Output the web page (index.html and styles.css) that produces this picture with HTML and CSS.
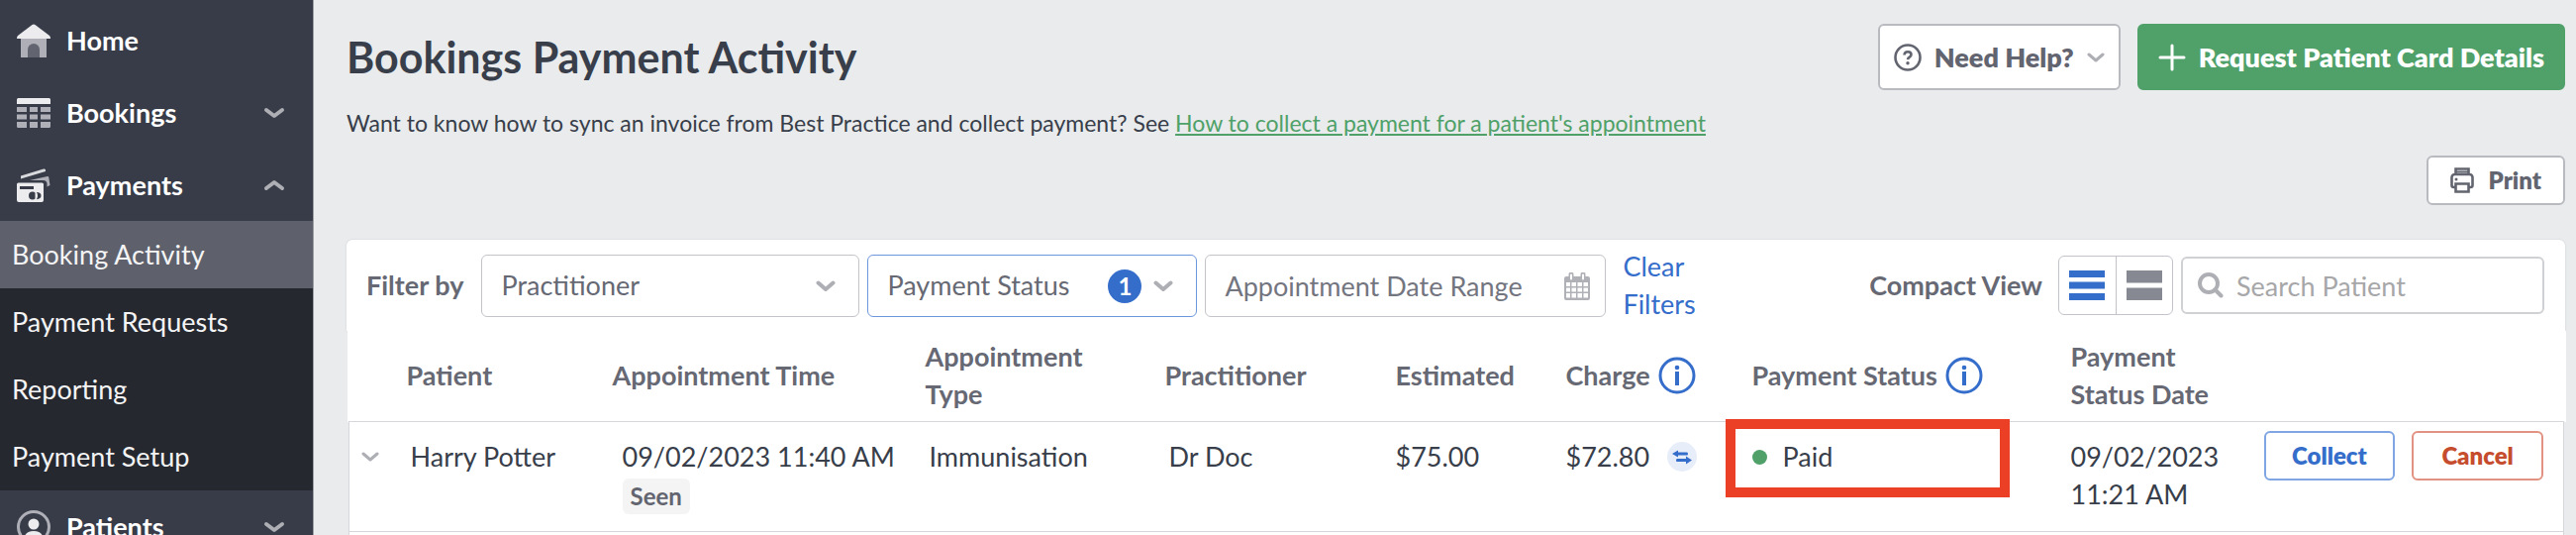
FILE: index.html
```html
<!DOCTYPE html>
<html lang="en">
<head>
<meta charset="utf-8">
<title>Bookings Payment Activity</title>
<link rel="stylesheet" href="styles.css">
</head>
<body>
<div class="app">
  <nav class="sidebar">
    <a class="nav-item" href="#">
      <svg class="nav-icon" viewBox="0 0 34 34"><path fill="#aeafb7" d="M4 14h26v20H4z"/><path fill="#62656f" d="M11 34V26a6 6 0 0 1 12 0v8z"/><path fill="#ececee" d="M15.500 1a2.500 2.500 0 0 1 3 0L33 12q1 1 1 3H0q0-2 1-3z"/></svg>
      <span>Home</span>
    </a>
    <a class="nav-item" href="#">
      <svg class="nav-icon" viewBox="0 0 34 34"><path fill="#ececee" d="M1.500 2h31a1.500 1.500 0 0 1 1.500 1.500V8H0V3.500A1.500 1.500 0 0 1 1.500 2z"/><path fill="#aeafb7" d="M0 11h10v5H0zM13 11h8v5h-8zM24 11h10v5H24zM0 18.500h10v5H0zM13 18.500h8v5h-8zM24 18.500h10v5H24zM0 26h10v6H1.500A1.500 1.500 0 0 1 0 30.500zM13 26h8v6h-8zM24 26h10v4.500a1.500 1.500 0 0 1-1.500 1.500H24z"/></svg>
      <span>Bookings</span>
      <svg class="nav-chevron" viewBox="0 0 22 12"><path d="M3 3l8 6 8-6"/></svg>
    </a>
    <a class="nav-item" href="#">
      <svg class="nav-icon" viewBox="0 0 34 34"><path fill="#d9dadd" d="M4 7.500L27 .500q1.500-.5 2 1V3L4 10.500z"/><path fill="#aeafb7" d="M13 12l18-4q1-.2 1.300 1L33.500 17l-3 1.500V15q-.5-3-4-3z"/><path fill="#ececee" fill-rule="evenodd" d="M1.500 14.500h24a1.500 1.500 0 0 1 1.500 1.500v16a2 2 0 0 1-2 2H2a2 2 0 0 1-2-2V16a1.500 1.500 0 0 1 1.500-1.500zM3 18v3h14v-3zM16 23.500a4 4 0 1 0 0 8 4 4 0 0 0 2.500-.9V24.400A4 4 0 0 0 16 23.500zM20 24q2 3.500 0 7.200 4.500-.2 4.500-3.600T20 24z"/></svg>
      <span>Payments</span>
      <svg class="nav-chevron" viewBox="0 0 22 12"><path d="M3 9l8-6 8 6"/></svg>
    </a>
    <div class="subnav">
      <a class="subnav-item is-active" href="#">Booking Activity</a>
      <a class="subnav-item" href="#">Payment Requests</a>
      <a class="subnav-item" href="#">Reporting</a>
      <a class="subnav-item" href="#">Payment Setup</a>
    </div>
    <a class="nav-item" href="#">
      <svg class="nav-icon" viewBox="0 0 34 34"><circle cx="17" cy="17" r="15.500" fill="none" stroke="#aeafb7" stroke-width="3"/><circle cx="17" cy="14" r="5.500" fill="#ececee"/><path fill="#ececee" d="M8 26q2-5 9-5t9 5q-4 4-9 4t-9-4z"/></svg>
      <span>Patients</span>
      <svg class="nav-chevron" viewBox="0 0 22 12"><path d="M3 3l8 6 8-6"/></svg>
    </a>
  </nav>

  <main class="main">
    <header class="page-head">
      <h1>Bookings Payment Activity</h1>
      <button class="btn btn-large" type="button">
        <svg class="icon-help" viewBox="0 0 28 28"><circle cx="14" cy="14" r="12.500" fill="none" stroke="currentColor" stroke-width="2.600"/><path d="M10.500 11.500q.3-3.300 3.600-3.300t3.400 2.900q0 1.500-1.700 2.600T14 16.200" fill="none" stroke="currentColor" stroke-width="2.600"/><circle cx="14" cy="19.700" r="1.700" fill="currentColor"/></svg>
        <span>Need Help?</span>
        <svg class="icon-caret" viewBox="0 0 18 10"><path d="M2 2l7 6 7-6"/></svg>
      </button>
      <button class="btn btn-large btn-primary" type="button">
        <svg class="icon-plus" viewBox="0 0 28 28"><path d="M14 2v24M2 14h24" stroke="currentColor" stroke-width="3" stroke-linecap="round"/></svg>
        <span>Request Patient Card Details</span>
      </button>
    </header>
    <p class="hint">Want to know how to sync an invoice from Best Practice and collect payment? See <a href="#">How to collect a payment for a patient's appointment</a></p>
    <div class="actions">
      <button class="btn btn-print" type="button">
        <svg class="icon-print" viewBox="0 0 24 26"><g fill="none" stroke="currentColor" stroke-width="2.600"><path d="M5.500 7V1.500h13V7M5.500 20H3.500a2 2 0 0 1-2-2V10a3 3 0 0 1 3-3h15a3 3 0 0 1 3 3v8a2 2 0 0 1-2 2h-2"/><path d="M5.500 16.500h13v8h-13z"/></g><path fill="currentColor" d="M5 3.500h14v2H5z"/><circle cx="6" cy="12" r="1.500" fill="currentColor"/></svg>
        <span>Print</span>
      </button>
    </div>

    <section class="toolbar">
      <span class="toolbar-label">Filter by</span>
      <div class="field field-practitioner">
        <select aria-label="Practitioner"><option>Practitioner</option></select>
        <svg class="field-caret" viewBox="0 0 20 12"><path d="M2.500 2.500L10 9l7.500-6.500"/></svg>
      </div>
      <div class="field field-status">
        <select class="is-set" aria-label="Payment Status"><option>Payment Status</option></select>
        <span class="badge">1</span>
        <svg class="field-caret" viewBox="0 0 20 12"><path d="M2.500 2.500L10 9l7.500-6.500"/></svg>
      </div>
      <div class="field field-date">
        <input type="text" aria-label="Appointment Date Range" placeholder="Appointment Date Range">
        <svg class="field-calendar" viewBox="0 0 26 28"><path fill="#b0b1b7" fill-rule="evenodd" d="M2 4h22a2 2 0 0 1 2 2v20a2 2 0 0 1-2 2H2a2 2 0 0 1-2-2V6a2 2 0 0 1 2-2zM2 10v4h4v-4zM7.500 10v4H12v-4zM13.500 10v4H18v-4zM19.500 10v4H24v-4zM2 15.500v4h4v-4zM7.500 15.500v4H12v-4zM13.500 15.500v4H18v-4zM19.500 15.500v4H24v-4zM2 21v4.500h4V21zM7.500 21v4.500H12V21zM13.500 21v4.500H18V21zM19.500 21v4.500H24V21z"/><path d="M7 2v5M19 2v5" stroke="#b0b1b7" stroke-width="5" stroke-linecap="round"/><path d="M7 2.500v4M19 2.500v4" stroke="#fff" stroke-width="2" stroke-linecap="round"/></svg>
      </div>
      <a class="clear" href="#">Clear Filters</a>
      <span class="toolbar-label toolbar-view">Compact View</span>
      <div class="toggle">
        <button type="button" aria-label="Compact"><svg viewBox="0 0 36 30"><path fill="#356dcb" d="M0 0h36v7H0zM0 11.500h36v7H0zM0 23h36v7H0z"/></svg></button>
        <button type="button" aria-label="Comfortable"><svg viewBox="0 0 36 30"><path fill="#868991" d="M0 0h36v12.500H0zM0 17.500h36V30H0z"/></svg></button>
      </div>
      <div class="field field-search">
        <input type="search" aria-label="Search Patient" placeholder="Search Patient">
        <svg class="field-lens" viewBox="0 0 26 26"><circle cx="11" cy="11" r="9" fill="none" stroke="#aeafb5" stroke-width="4"/><path d="M17.500 17.500l6 6" stroke="#aeafb5" stroke-width="4" stroke-linecap="round"/></svg>
      </div>
    </section>

    <table class="bookings">
      <colgroup>
        <col class="c-toggle"><col class="c-patient"><col class="c-time"><col class="c-type"><col class="c-doctor"><col class="c-estimate"><col class="c-charge"><col class="c-status"><col class="c-date"><col class="c-actions">
      </colgroup>
      <thead>
        <tr>
          <th></th>
          <th>Patient</th>
          <th>Appointment Time</th>
          <th>Appointment<br>Type</th>
          <th>Practitioner</th>
          <th>Estimated</th>
          <th><div class="with-info">Charge <svg class="icon-info" viewBox="0 0 38 38"><circle cx="19" cy="19" r="17" fill="none" stroke="currentColor" stroke-width="3"/><path fill="currentColor" d="M17 15h4v14h-4z"/><circle cx="19" cy="11" r="2.300" fill="currentColor"/></svg></div></th>
          <th><div class="with-info">Payment Status <svg class="icon-info" viewBox="0 0 38 38"><circle cx="19" cy="19" r="17" fill="none" stroke="currentColor" stroke-width="3"/><path fill="currentColor" d="M17 15h4v14h-4z"/><circle cx="19" cy="11" r="2.300" fill="currentColor"/></svg></div></th>
          <th>Payment<br>Status Date</th>
          <th></th>
        </tr>
      </thead>
      <tbody>
        <tr>
          <td><button class="expand" type="button" aria-label="Expand"><svg viewBox="0 0 18 10"><path d="M2 2l7 6 7-6"/></svg></button></td>
          <td class="indent-s">Harry Potter</td>
          <td class="indent-m">09/02/2023 11:40 AM<span class="tag">Seen</span></td>
          <td class="indent-s">Immunisation</td>
          <td class="indent-s">Dr Doc</td>
          <td>$75.00</td>
          <td><div class="charge">$72.80 <svg class="icon-swap" viewBox="0 0 30 30"><circle cx="15" cy="15" r="15" fill="#e8eef9"/><g fill="#356dcb"><path d="M5 12l6-3.500v2h9q1 0 1 1.500t-1 1.500h-9v2z"/><path d="M25 18.500l-6-4v2.500h-9q-1 0-1 1.500t1 1.500h9v2.500z"/></g></svg></div></td>
          <td class="status-cell"><div class="status"><span class="dot"></span>Paid</div><div class="highlight"></div></td>
          <td>09/02/2023<br>11:21 AM</td>
          <td class="row-actions"><div class="row-buttons"><button class="btn-outline btn-blue" type="button">Collect</button><button class="btn-outline btn-red" type="button">Cancel</button></div></td>
        </tr>
        <tr><td colspan="10"></td></tr>
      </tbody>
    </table>
  </main>
</div>
</body>
</html>
```
FILE: styles.css
```css
* { box-sizing: border-box; }

html { height: 100%; overflow: hidden; }

body {
  height: 100%;
  margin: 0;
  overflow: hidden;
  background: #e9ebec;
  color: #383e4a;
  font: 27px/38px Lato, "Liberation Sans", sans-serif;
}

button, input, select { font: inherit; color: inherit; margin: 0; }

.app { display: flex; min-height: 100%; }

/* Sidebar */
.sidebar {
  flex: 0 0 317px;
  padding-top: 4px;
  background: #373c48;
  border-right: 1px solid #9c9ea5;
}

.nav-item {
  display: flex;
  align-items: center;
  gap: 16px;
  height: 73px;
  padding: 0 28px 0 17px;
  color: #fff;
  font-weight: 700;
  text-decoration: none;
}

.nav-icon { width: 34px; height: 34px; }

.nav-chevron { width: 22px; height: 12px; margin-left: auto; }

.nav-chevron path,
.icon-caret path,
.field-caret path,
.expand path {
  fill: none;
  stroke: #aeafb5;
  stroke-width: 4;
  stroke-linecap: round;
  stroke-linejoin: round;
}

.subnav { background: #26282f; }

.subnav-item {
  display: flex;
  align-items: center;
  height: 68px;
  padding-left: 12px;
  color: #f4f4f5;
  text-decoration: none;
}

.subnav-item.is-active { background: #5e616c; }

/* Page head */
.main { flex: 1; min-width: 0; padding: 24px 11px 0 33px; }

.page-head { display: flex; align-items: center; gap: 17px; }

h1 {
  flex: 1;
  margin: 0;
  font-size: 43px;
  line-height: 52px;
  font-weight: 700;
}

.btn {
  display: flex;
  align-items: center;
  border: 2px solid #b9bac0;
  border-radius: 6px;
  background: #fff;
  color: #62656f;
  font-weight: 800;
}

.btn-large { height: 67px; padding: 0 14px; gap: 13px; }

.btn-primary {
  padding: 0 19px;
  border-color: #4fa169;
  background: #4fa169;
  color: #fff;
}

.icon-help, .icon-plus { width: 28px; height: 28px; }
.icon-caret { width: 18px; height: 10px; }
.icon-caret path, .expand path { stroke-width: 3; }

.hint { margin: 15px 0; font-size: 23px; line-height: 36px; }
.hint a { color: #4fa169; }

.actions { display: flex; justify-content: flex-end; margin-bottom: 35px; }

.btn-print { height: 50px; padding: 0 22px; gap: 15px; font-size: 24px; }
.icon-print { width: 24px; height: 26px; }

/* Filters */
.toolbar {
  display: flex;
  align-items: center;
  gap: 8px;
  padding: 8px 21px 8px 20px;
  border-radius: 6px 6px 0 0;
  background: #fff;
  box-shadow: 0 0 2px #c9cbd0;
  color: #666973;
}

.toolbar-label { margin-right: 10px; font-weight: 700; white-space: nowrap; }

.field { position: relative; }
.field-practitioner { flex: 0 1 382px; }
.field-status { flex: 0 1 333px; }
.field-date { flex: 0 1 405px; }
.field-search { flex: 0 1 367px; }

.field select,
.field input {
  display: block;
  width: 100%;
  height: 63px;
  padding: 0 19px;
  border: 1px solid #c3c4c9;
  border-radius: 6px;
  background: #fff;
  appearance: none;
  outline: 0;
}

.field select.is-set { border-color: #6d97dc; }
.field input::placeholder { color: #73757f; opacity: 1; }

.field-search input { height: 58px; padding-left: 54px; border: 2px solid #d0d1d5; }
.field-search input::placeholder { color: #a7a7a9; }

.field-caret { position: absolute; right: 24px; top: 26px; width: 20px; height: 12px; }
.field-calendar { position: absolute; right: 16px; top: 18px; width: 26px; height: 28px; }
.field-lens { position: absolute; left: 17px; top: 16px; width: 26px; height: 26px; }

.badge {
  position: absolute;
  right: 56px;
  top: 15px;
  width: 34px;
  height: 34px;
  border-radius: 50%;
  background: #356dcb;
  color: #fff;
  font-size: 24px;
  font-weight: 700;
  line-height: 34px;
  text-align: center;
}

.clear { width: 80px; margin-left: 9px; color: #356dcb; text-decoration: none; }

.toolbar-view { margin: 0 8px 0 auto; }

.toggle {
  display: flex;
  height: 60px;
  border: 1px solid #c3c4c9;
  border-radius: 6px;
}

.toggle button {
  display: flex;
  align-items: center;
  width: 57px;
  padding: 0 10px;
  border: 0;
  background: none;
}

.toggle button + button { border-left: 1px solid #c3c4c9; }
.toggle svg { width: 36px; height: 30px; }

/* Table */
.bookings {
  width: calc(100% - 4px);
  margin: 0 2px;
  border-collapse: collapse;
  table-layout: fixed;
}

.c-toggle { width: 58px; }
.c-patient { width: 208px; }
.c-time { width: 316px; }
.c-type { width: 242px; }
.c-doctor { width: 233px; }
.c-estimate { width: 172px; }
.c-charge { width: 188px; }
.c-status { width: 322px; }
.c-date { width: 195px; }
.c-actions { width: 303px; }

.bookings thead { background: #fff; box-shadow: -2px 0 #fff, 2px 0 #fff; }

.bookings th {
  padding: 7px 0 8px;
  color: #666973;
  font-weight: 700;
  text-align: left;
}

.with-info { display: flex; align-items: center; gap: 8px; }
.icon-info { width: 38px; height: 38px; color: #356dcb; }

.bookings tbody { background: #fff; }
.bookings tbody tr { height: 111px; border: 1px solid #d6d7dc; }
.bookings td { padding: 16px 0 0; vertical-align: top; white-space: nowrap; }
.bookings td.indent-s { padding-left: 4px; }
.bookings td.indent-m { padding-left: 10px; }

.expand {
  display: flex;
  align-items: center;
  height: 38px;
  padding: 0 12px;
  border: 0;
  background: none;
}

.expand svg { width: 18px; height: 10px; }

.tag {
  display: block;
  width: max-content;
  margin-top: 3px;
  padding: 0 8px;
  border-radius: 6px;
  background: #f4f4f5;
  color: #62656f;
  font-size: 24px;
  font-weight: 700;
  line-height: 36px;
}

.charge { display: flex; align-items: center; gap: 18px; }
.icon-swap { width: 30px; height: 30px; }

.status-cell { position: relative; }
.status { display: flex; align-items: center; gap: 16px; }
.dot { width: 15px; height: 15px; border-radius: 50%; background: #4fa169; }

/* Callout frame around the status value */
.highlight {
  position: absolute;
  left: -27px;
  top: -3px;
  width: 287px;
  height: 79px;
  border: 10px solid #eb4026;
}

.bookings td.row-actions { padding: 9px 20px 0 0; }
.row-buttons { display: flex; justify-content: flex-end; gap: 17px; }

.btn-outline {
  width: 133px;
  height: 50px;
  padding: 0;
  border: 2px solid;
  border-radius: 6px;
  background: #fff;
  font-size: 24px;
  font-weight: 800;
}

.btn-blue { border-color: #7fa6e2; color: #356dcb; }
.btn-red { border-color: #e29282; color: #c64c2e; }
```
